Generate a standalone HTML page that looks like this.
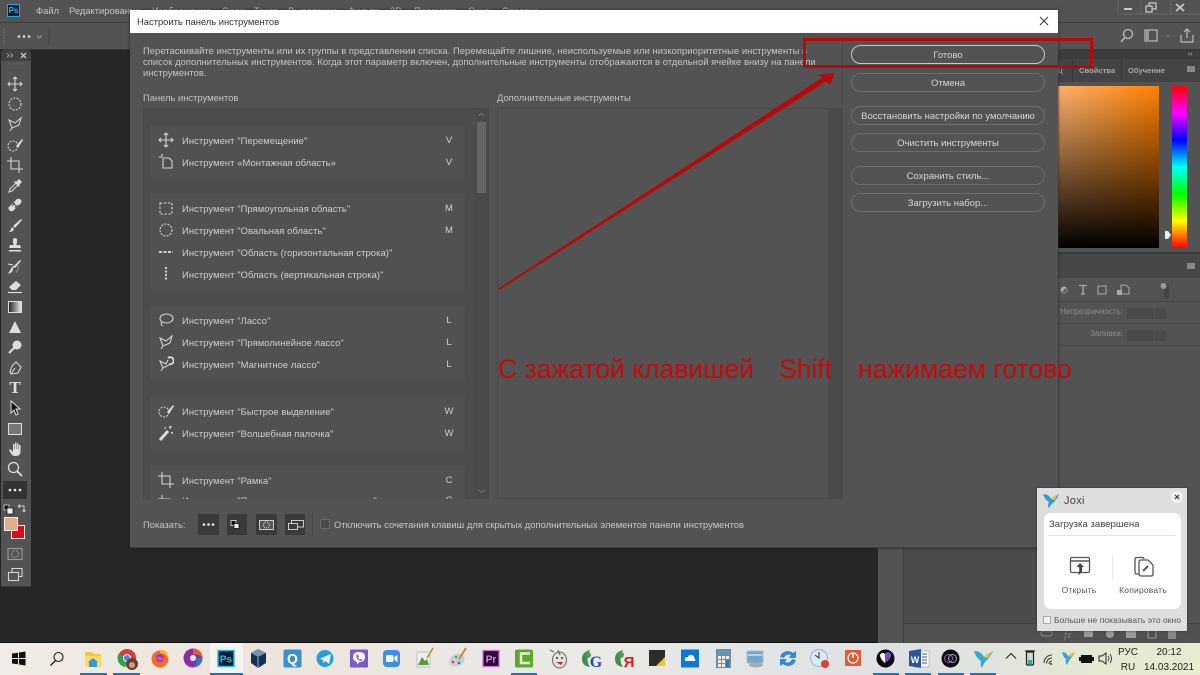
<!DOCTYPE html>
<html lang="ru"><head><meta charset="utf-8"><title>Photoshop</title>
<style>
html,body{margin:0;padding:0;width:1200px;height:675px;overflow:hidden;background:#535353}
body{position:relative;font-family:"Liberation Sans",sans-serif;font-size:9.4px;color:#d0d0d0}
.a{position:absolute}
.t{position:absolute;white-space:nowrap;line-height:12px}
.m{color:#c4c4c4;top:5px;font-size:9.4px}
.row{position:absolute;left:182px;white-space:nowrap;line-height:12px;color:#cfcfcf;font-size:9.4px;letter-spacing:.08px}
.k{position:absolute;left:429px;width:40px;text-align:center;line-height:12px;color:#cfcfcf;font-size:9.5px}
.g{position:absolute;left:150px;width:315px;background:#515151;border:1px solid #4f4f4f;box-sizing:border-box}
.b{position:absolute;left:851px;width:194px;height:19px;box-sizing:border-box;border:1px solid #6e6e6e;border-radius:10px;text-align:center;line-height:20px;color:#d6d6d6;font-size:9.5px}
.s{position:absolute;background:#3a3a3a;width:21px;height:21px;top:514px}
svg{position:absolute;overflow:visible}
.ic{fill:none;stroke:#d4d4d4;stroke-width:1.1}
.bar{position:absolute;top:673px;height:2px;background:#0a78d4}
</style></head><body>

<!-- PS chrome -->
<div class="a" style="left:0;top:0;width:1200px;height:22px;background:#535353"></div>
<div class="a" style="left:0;top:22px;width:1200px;height:1px;background:#3e3e3e"></div>
<div class="a" style="left:0;top:49px;width:1200px;height:1px;background:#3a3a3a"></div>
<div class="a" style="left:7px;top:4px;width:13px;height:13px;background:#001d34;border:1px solid #1fa8e8;box-sizing:border-box;color:#35b4f5;font-size:8px;font-weight:bold;line-height:11px;text-align:center">Ps</div>
<div class="t m" style="left:36px">Файл</div>
<div class="t m" style="left:69px">Редактирование</div>
<div class="t m" style="left:152px">Изображение</div>
<div class="t m" style="left:222px">Слои</div>
<div class="t m" style="left:254px">Текст</div>
<div class="t m" style="left:288px">Выделение</div>
<div class="t m" style="left:348px">Фильтр</div>
<div class="t m" style="left:390px">3D</div>
<div class="t m" style="left:414px">Просмотр</div>
<div class="t m" style="left:468px">Окно</div>
<div class="t m" style="left:502px">Справка</div>
<svg style="left:1118px;top:0" width="82" height="16"><path d="M0 0V11Q0 14 3 14H82" fill="none" stroke="#666"/><path d="M23 0V14M53 0V14" stroke="#666"/><path d="M6 9H14" stroke="#ccc" stroke-width="2"/><path d="M28 6H34V12H28ZM31 6V3H38V9H34" fill="none" stroke="#ccc" stroke-width="1.2"/><path d="M58 4L66 11M66 4L58 11" stroke="#ccc" stroke-width="1.7"/></svg>

<!-- options bar -->
<svg style="left:0;top:23px" width="60" height="26"><path d="M4 5V22" stroke="#777" stroke-dasharray="1 1"/><circle cx="19" cy="13.5" r="1.3" fill="#ddd"/><circle cx="24" cy="13.5" r="1.3" fill="#ddd"/><circle cx="29" cy="13.5" r="1.3" fill="#ddd"/><path d="M37 12.5L39.5 15L42 12.5" fill="none" stroke="#999"/><path d="M49 5V22" stroke="#474747" stroke-width="1.5"/></svg>
<svg style="left:1118px;top:27px" width="82" height="18"><circle cx="10" cy="7" r="4.5" fill="none" stroke="#bbb" stroke-width="1.3"/><path d="M7 10.5L3 15" stroke="#bbb" stroke-width="1.4"/><rect x="27" y="3" width="12" height="11" fill="none" stroke="#bbb" stroke-width="1.2"/><rect x="28" y="4" width="3" height="9" fill="#999"/><path d="M48 8L50 10L52 8" fill="none" stroke="#777"/><path d="M63 8V15H75V8M69 11V2M66 5L69 2L72 5" fill="none" stroke="#bbb" stroke-width="1.2"/></svg>

<!-- canvas -->
<div class="a" style="left:0;top:50px;width:878px;height:593px;background:#262626"></div>
<div class="a" style="left:878px;top:50px;width:25px;height:593px;background:#535353"></div>
<div class="a" style="left:903px;top:50px;width:1px;height:593px;background:#3d3d3d"></div>
<div class="a" style="left:904px;top:50px;width:296px;height:573px;background:#4b4b4b"></div>
<div class="a" style="left:904px;top:623px;width:296px;height:1px;background:#424242"></div>
<div class="a" style="left:904px;top:624px;width:296px;height:19px;background:#505050"></div>
<div class="a" style="left:0;top:642px;width:878px;height:1px;background:#111"></div>

<!-- toolbar -->
<div class="a" style="left:1px;top:50px;width:30px;height:537px;background:#535353;border-radius:3px 3px 0 0;border-bottom:1px solid #3a3a3a;box-sizing:border-box"></div>
<div class="a" style="left:1px;top:50px;width:30px;height:11px;background:#414141;border-radius:3px 3px 0 0"></div>
<svg style="left:0;top:50px" width="32" height="16"><path d="M7 3.5L9 5.5L7 7.5M10.5 3.5L12.500 5.500L10.500 7.500" fill="none" stroke="#bbb" stroke-width=".8"/><path d="M21 3L26 8M26 3L21 8" stroke="#ddd" stroke-width="1.1"/><path d="M8 14H23" stroke="#6a6a6a" stroke-dasharray="1 1"/></svg>

<svg width="0" height="0" style="left:0;top:0"><defs>
<symbol id="mv" viewBox="0 0 16 16"><path class="ic" d="M8 1V15M1 8H15M6 3L8 1L10 3M6 13L8 15L10 13M3 6L1 8L3 10M13 6L15 8L13 10" stroke-width="1.3"/></symbol>
<symbol id="art" viewBox="0 0 16 16"><path class="ic" d="M4 0V3M1 3H4M5 4H11L14 7V14H5V4Z"/></symbol>
<symbol id="rc" viewBox="0 0 16 16"><rect class="ic" x="2" y="3" width="12" height="11" stroke-dasharray="2.500 1.500"/></symbol>
<symbol id="ov" viewBox="0 0 16 16"><circle class="ic" cx="8" cy="8" r="6" stroke-dasharray="2 1.300"/></symbol>
<symbol id="hr" viewBox="0 0 16 16"><path d="M1 8H15" stroke="#cfcfcf" stroke-width="2" stroke-dasharray="3 1.500"/></symbol>
<symbol id="vr" viewBox="0 0 16 16"><path d="M8 1V15" stroke="#cfcfcf" stroke-width="2" stroke-dasharray="2 1.500"/></symbol>
<symbol id="ls" viewBox="0 0 16 16"><ellipse class="ic" cx="8.500" cy="6.500" rx="6.500" ry="4.500"/><path class="ic" d="M4 10Q2 13 5 14"/></symbol>
<symbol id="pl" viewBox="0 0 16 16"><path class="ic" d="M14 2L12 9L5 12L2 4L8 7ZM5 12L3 15"/></symbol>
<symbol id="mg" viewBox="0 0 16 16"><path class="ic" d="M10 4L8 8L2 5L5 12L11 9M5 12L3 15"/><path d="M10 2A3.500 3.500 0 1 1 11 8" fill="none" stroke="#ddd" stroke-width="1.800"/></symbol>
<symbol id="qk" viewBox="0 0 16 16"><circle class="ic" cx="6" cy="9" r="5" stroke-dasharray="2 1.300"/><path d="M9 9L15 2L16 3L11 11Z" fill="#ddd"/></symbol>
<symbol id="wd" viewBox="0 0 16 16"><path d="M2 15L10 6" stroke="#ddd" stroke-width="3"/><path d="M12 1V4M14 2H11M14 7V9M13 8H15M7 2V4" stroke="#ddd"/></symbol>
<symbol id="cr" viewBox="0 0 16 16"><path class="ic" d="M4 0V12H16M0 4H12V16" stroke-width="1.400"/></symbol>
<symbol id="ey" viewBox="0 0 16 16"><path class="ic" d="M9 5L3 11L2 14L5 13L11 7"/><path d="M9 4L12 1L15 4L12 7L13 8L12 9L7 4L8 3Z" fill="#ddd"/></symbol>
<symbol id="he" viewBox="0 0 16 16"><path d="M2 10L10 2Q12 1 14 3Q15 5 14 6L6 14Q4 15 2 13Q1 11 2 10Z" fill="#ddd"/><path d="M6 6L10 10M5 9L8 6M8 11L11 8" stroke="#535353"/></symbol>
<symbol id="br" viewBox="0 0 16 16"><path d="M14 1L15 2L8 10L6 8ZM5 9L7 11Q6 14 2 14Q4 12 5 9Z" fill="#ddd"/></symbol>
<symbol id="st" viewBox="0 0 16 16"><path d="M6 2Q8 0 10 2V6L9 8H13L14 11H2L3 8H7L6 6ZM2 13H14V14.500H2Z" fill="#ddd"/></symbol>
<symbol id="hb" viewBox="0 0 16 16"><path d="M13 1L14 2L8 9L6 8Z" fill="#ddd"/><path d="M6 8L5 12Q3 14 2 14Q4 11 5 9ZM1 5L6 6" stroke="#ddd" fill="#ddd"/><path class="ic" d="M11 7Q12 11 9 13" stroke-dasharray="1 1"/></symbol>
<symbol id="er" viewBox="0 0 16 16"><path d="M9 2L14 6L9 11H5L2 8Z" fill="#ddd"/><path d="M1 13.500H15" stroke="#ddd" stroke-width="1.200"/></symbol>
<symbol id="gr" viewBox="0 0 16 16"><defs><linearGradient id="gg"><stop offset="0" stop-color="#222"/><stop offset="1" stop-color="#eee"/></linearGradient></defs><rect x="1.500" y="2.500" width="13" height="11" fill="url(#gg)" stroke="#ddd"/></symbol>
<symbol id="fl" viewBox="0 0 16 16"><path d="M8 2L14 14H2Z" fill="#ddd"/></symbol>
<symbol id="dg" viewBox="0 0 16 16"><circle cx="10" cy="6" r="4.500" fill="#ddd"/><path d="M7 9L2 14" stroke="#ddd" stroke-width="2"/></symbol>
<symbol id="pn" viewBox="0 0 16 16"><path class="ic" d="M9 2L14 7L11 13L4 14L3 12L5 6ZM4 14L8 8" stroke-width="1.300"/></symbol>
<symbol id="ar" viewBox="0 0 16 16"><path d="M4 1L13 9H9L11 14L9 15L7 10L4 13Z" fill="#111" stroke="#ddd"/></symbol>
<symbol id="sq" viewBox="0 0 16 16"><rect x="1.500" y="2.500" width="13" height="11" fill="#777" stroke="#ddd"/></symbol>
<symbol id="hd" viewBox="0 0 16 16"><path d="M3 8L6 11V3H7.500V8H8V1.500H9.500V8H10V2.500H11.500V8H12V4H13.500V11Q13 15 9 15H7Q5 15 2 9Z" fill="#ddd"/></symbol>
<symbol id="zm" viewBox="0 0 16 16"><circle cx="6.500" cy="6.500" r="5" fill="none" stroke="#ddd" stroke-width="1.300"/><path d="M10 10L15 15" stroke="#ddd" stroke-width="1.800"/></symbol>
<symbol id="scr" viewBox="0 0 16 16"><rect class="ic" x="1.500" y="6.500" width="10" height="8"/><path class="ic" d="M5 6V2.500H15V10.500H12"/></symbol>
<symbol id="qm" viewBox="0 0 16 16"><rect class="ic" x="1" y="2.500" width="14" height="11"/><circle class="ic" cx="8" cy="8" r="3.500" stroke-dasharray="1.500 1"/></symbol>
</defs></svg>

<svg style="left:7px;top:76px" width="16" height="16"><use href="#mv"/></svg>
<svg style="left:7px;top:96px" width="16" height="16"><use href="#ov"/></svg>
<svg style="left:7px;top:116px" width="16" height="16"><use href="#pl"/></svg>
<svg style="left:7px;top:137px" width="16" height="16"><use href="#qk"/></svg>
<svg style="left:7px;top:157px" width="16" height="16"><use href="#cr"/></svg>
<svg style="left:7px;top:178px" width="16" height="16"><use href="#ey"/></svg>
<svg style="left:7px;top:197px" width="16" height="16"><use href="#he"/></svg>
<svg style="left:7px;top:218px" width="16" height="16"><use href="#br"/></svg>
<svg style="left:7px;top:237px" width="16" height="16"><use href="#st"/></svg>
<svg style="left:7px;top:259px" width="16" height="16"><use href="#hb"/></svg>
<svg style="left:7px;top:279px" width="16" height="16"><use href="#er"/></svg>
<svg style="left:7px;top:299px" width="16" height="16"><use href="#gr"/></svg>
<svg style="left:7px;top:319px" width="16" height="16"><use href="#fl"/></svg>
<svg style="left:7px;top:339px" width="16" height="16"><use href="#dg"/></svg>
<svg style="left:7px;top:360px" width="16" height="16"><use href="#pn"/></svg>
<div class="t" style="left:5px;top:378px;width:20px;text-align:center;font:bold 17px/20px 'Liberation Serif',serif;color:#ddd">T</div>
<svg style="left:7px;top:400px" width="16" height="16"><use href="#ar"/></svg>
<svg style="left:7px;top:421px" width="16" height="16"><use href="#sq"/></svg>
<svg style="left:7px;top:441px" width="16" height="16"><use href="#hd"/></svg>
<svg style="left:7px;top:461px" width="16" height="16"><use href="#zm"/></svg>
<div class="a" style="left:3px;top:481px;width:24px;height:18px;background:#333"></div>
<svg style="left:3px;top:481px" width="24" height="18"><circle cx="7" cy="9" r="1.300" fill="#eee"/><circle cx="12" cy="9" r="1.300" fill="#eee"/><circle cx="17" cy="9" r="1.300" fill="#eee"/></svg>
<svg style="left:3px;top:504px" width="24" height="12"><rect x="1" y="1" width="5" height="5" fill="#111" stroke="#eee" stroke-width=".7"/><rect x="4" y="4" width="6" height="6" fill="#eee" stroke="#111" stroke-width=".7"/><path d="M15 2H21V8M15 2L17 0.500M15 2L17 4M21 8L19.500 6M21 8L22.500 6" fill="none" stroke="#ccc"/></svg>
<div class="a" style="left:11px;top:525px;width:14px;height:14px;background:#e30613;border:1px solid #eee;box-sizing:border-box"></div>
<div class="a" style="left:4px;top:517px;width:14px;height:14px;background:#e0ae8c;border:1px solid #eee;box-sizing:border-box"></div>
<svg style="left:7px;top:546px;opacity:.55" width="16" height="16"><use href="#qm"/></svg>
<svg style="left:7px;top:566px" width="16" height="16"><use href="#scr"/></svg>

<!-- right docks -->
<div class="a" style="left:1058px;top:50px;width:142px;height:9px;background:#3d3d3d"></div>
<div class="t" style="left:1188px;top:49px;color:#ccc;font-size:7px">››</div>
<div class="a" style="left:1058px;top:59px;width:142px;height:23px;background:#444"></div>
<div class="a" style="left:1058px;top:82px;width:142px;height:170px;background:#535353"></div>
<div class="t" style="left:1058px;top:65px;color:#a8a8a8;font-size:8px">ц</div>
<div class="t" style="left:1079px;top:65px;color:#a8a8a8;font-size:7.600px;font-weight:bold">Свойства</div>
<div class="t" style="left:1128px;top:65px;color:#a8a8a8;font-size:7.600px;font-weight:bold">Обучение</div>
<div class="a" style="left:1072px;top:59px;width:1px;height:23px;background:#383838"></div>
<div class="a" style="left:1121px;top:59px;width:1px;height:23px;background:#383838"></div>
<div class="a" style="left:1187px;top:66px;width:8px;height:6px;background:#888"></div>
<div class="a" style="left:1058px;top:86px;width:101px;height:162px;background:linear-gradient(to bottom,rgba(0,0,0,0),#000),linear-gradient(to right,#ffb36f,#ff8000)"></div>
<div class="a" style="left:1172px;top:86px;width:15px;height:162px;background:linear-gradient(to bottom,#f00,#f0f 16.700%,#00f 33.300%,#0ff 50%,#0f0 66.700%,#ff0 83.300%,#f00)"></div>
<svg style="left:1164px;top:230px" width="8" height="10"><path d="M1 1H4L7 5L4 9H1Z" fill="#eee"/></svg>
<div class="a" style="left:1058px;top:252px;width:142px;height:2px;background:#3a3a3a"></div>
<div class="a" style="left:1058px;top:254px;width:142px;height:24px;background:#474747"></div>
<div class="a" style="left:1187px;top:263px;width:8px;height:6px;background:#888"></div>
<div class="a" style="left:1058px;top:278px;width:142px;height:345px;background:#535353"></div>
<div class="a" style="left:1058px;top:301px;width:142px;height:1px;background:#474747"></div>
<div class="a" style="left:1058px;top:323px;width:142px;height:1px;background:#474747"></div>
<div class="a" style="left:1058px;top:345px;width:142px;height:1px;background:#474747"></div>
<svg style="left:1058px;top:282px" width="115" height="18"><circle cx="6" cy="8" r="3.500" fill="#aaa"/><path d="M3.500 10.500L8.500 5.500V10.500Z" fill="#555"/><path d="M21 3.500H29M25 3.500V12M23 12H27" stroke="#aaa" stroke-width="1.300" fill="none"/><rect x="40" y="4" width="8" height="8" fill="none" stroke="#aaa"/><path d="M40 4h.1M48 4h.1M40 12h.1M48 12h.1" stroke="#aaa" stroke-width="3"/><path d="M63 3H68L71 6V12H63Z" fill="none" stroke="#aaa"/><rect x="59" y="8" width="5" height="5" fill="#aaa"/><rect x="106" y="2" width="5" height="15" rx="2.500" fill="#444"/><circle cx="105.500" cy="4" r="3" fill="#999"/></svg>
<div class="t" style="left:1058px;width:65px;top:306px;text-align:right;color:#8d8d8d;font-size:8px">Непрозрачность:</div>
<div class="t" style="left:1058px;width:65px;top:328px;text-align:right;color:#8d8d8d;font-size:8px">Заливка:</div>
<div class="a" style="left:1127px;top:308px;width:27px;height:11px;background:#4a4a4a"></div>
<div class="a" style="left:1155px;top:308px;width:11px;height:11px;background:#4a4a4a"></div>
<div class="a" style="left:1127px;top:330px;width:27px;height:11px;background:#4a4a4a"></div>
<div class="a" style="left:1155px;top:330px;width:11px;height:11px;background:#4a4a4a"></div>
<svg style="left:1040px;top:627px" width="150" height="14"><rect x="1" y="4" width="11" height="5" rx="2.500" fill="none" stroke="#8a8a8a"/><text x="24" y="11" fill="#8a8a8a" font-size="10" font-style="italic" font-family="Liberation Serif">fx</text><rect x="44" y="3" width="9" height="7" fill="#999"/><circle cx="70" cy="7" r="4" fill="#999"/><rect x="86" y="3" width="10" height="8" fill="#999"/><rect x="108" y="3" width="8" height="8" fill="none" stroke="#999"/><rect x="128" y="3" width="8" height="9" fill="#888"/></svg>

<!-- dialog -->
<div class="a" style="left:130px;top:10px;width:928px;height:538px;background:#535353;box-shadow:0 0 3px #222;border-bottom:1px solid #3f3f3f;box-sizing:border-box"></div>
<div class="a" style="left:130px;top:10px;width:928px;height:23px;background:#fff"></div>
<div class="t" style="left:137px;top:16px;color:#333;font-size:9.4px">Настроить панель инструментов</div>
<svg style="left:1039px;top:16px" width="10" height="10"><path d="M1 1L9 9M9 1L1 9" stroke="#333" stroke-width="1"/></svg>
<div class="a" style="left:842px;top:33px;width:1px;height:466px;background:#4a4a4a"></div>
<div class="t" style="left:143px;top:44.500px;color:#c6c6c6;line-height:11px;font-size:9.4px;letter-spacing:.05px">Перетаскивайте инструменты или их группы в представлении списка. Перемещайте лишние, неиспользуемые или низкоприоритетные инструменты в<br>список дополнительных инструментов. Когда этот параметр включен, дополнительные инструменты отображаются в отдельной ячейке внизу на панели<br>инструментов.</div>
<div class="t" style="left:143px;top:92px;color:#c4c4c4;font-size:9.4px">Панель инструментов</div>
<div class="t" style="left:497px;top:92px;color:#c4c4c4;font-size:9.4px">Дополнительные инструменты</div>

<div class="a" style="left:143px;top:108px;width:346px;height:391px;background:#4c4c4c;border:1px solid #484848;box-sizing:border-box;overflow:hidden"></div>
<div class="a" style="left:475px;top:109px;width:13px;height:389px;background:#4a4a4a"></div>
<div class="a" style="left:477px;top:122px;width:9px;height:71px;background:#656565"></div>
<svg style="left:477px;top:112px" width="9" height="6"><path d="M1.500 4L4.500 1.500L7.500 4" fill="none" stroke="#777"/></svg>
<svg style="left:477px;top:488px" width="9" height="6"><path d="M1.500 2L4.500 4.500L7.500 2" fill="none" stroke="#777"/></svg>

<div class="g" style="top:125px;height:53px"></div>
<div class="g" style="top:193px;height:97px"></div>
<div class="g" style="top:306px;height:75px"></div>
<div class="g" style="top:396px;height:54px"></div>
<div class="a" style="left:150px;top:465px;width:315px;height:34px;overflow:hidden">
<div class="g" style="left:0;top:0;height:60px"></div>
<div class="row" style="left:32px;top:30px">Инструмент "Перспективное кадрирование"</div>
<div class="k" style="left:279px;top:30px">C</div>
<svg style="left:8px;top:30px" width="16" height="16"><use href="#cr"/></svg>
</div>

<svg style="left:158px;top:132px" width="16" height="16"><use href="#mv"/></svg>
<svg style="left:158px;top:154px" width="16" height="16"><use href="#art"/></svg>
<svg style="left:158px;top:200px" width="16" height="16"><use href="#rc"/></svg>
<svg style="left:158px;top:222px" width="16" height="16"><use href="#ov"/></svg>
<svg style="left:158px;top:244px" width="16" height="16"><use href="#hr"/></svg>
<svg style="left:158px;top:266px" width="16" height="16"><use href="#vr"/></svg>
<svg style="left:158px;top:312px" width="16" height="16"><use href="#ls"/></svg>
<svg style="left:158px;top:334px" width="16" height="16"><use href="#pl"/></svg>
<svg style="left:158px;top:356px" width="16" height="16"><use href="#mg"/></svg>
<svg style="left:158px;top:403px" width="16" height="16"><use href="#qk"/></svg>
<svg style="left:158px;top:425px" width="16" height="16"><use href="#wd"/></svg>
<svg style="left:158px;top:472px" width="16" height="16"><use href="#cr"/></svg>

<div class="row" style="top:134.500px">Инструмент "Перемещение"</div><div class="k" style="top:134.500px">V</div>
<div class="row" style="top:156.500px">Инструмент «Монтажная область»</div><div class="k" style="top:156.500px">V</div>
<div class="row" style="top:202.500px">Инструмент "Прямоугольная область"</div><div class="k" style="top:202.500px">M</div>
<div class="row" style="top:224.500px">Инструмент "Овальная область"</div><div class="k" style="top:224.500px">M</div>
<div class="row" style="top:246.500px">Инструмент "Область (горизонтальная строка)"</div>
<div class="row" style="top:268.500px">Инструмент "Область (вертикальная строка)"</div>
<div class="row" style="top:314.500px">Инструмент "Лассо"</div><div class="k" style="top:314.500px">L</div>
<div class="row" style="top:336.500px">Инструмент "Прямолинейное лассо"</div><div class="k" style="top:336.500px">L</div>
<div class="row" style="top:358.500px">Инструмент "Магнитное лассо"</div><div class="k" style="top:358.500px">L</div>
<div class="row" style="top:405.500px">Инструмент "Быстрое выделение"</div><div class="k" style="top:405.500px">W</div>
<div class="row" style="top:427.500px">Инструмент "Волшебная палочка"</div><div class="k" style="top:427.500px">W</div>
<div class="row" style="top:474.500px">Инструмент "Рамка"</div><div class="k" style="top:474.500px">C</div>

<div class="a" style="left:497px;top:108px;width:345px;height:391px;background:#535353;border:1px solid #484848;box-sizing:border-box"></div>
<div class="a" style="left:828px;top:109px;width:13px;height:389px;background:#4a4a4a"></div>

<div class="b" style="top:45px;border-color:#c8c8c8;border-width:1.500px;line-height:19px">Готово</div>
<div class="b" style="top:73px">Отмена</div>
<div class="b" style="top:106px">Восстановить настройки по умолчанию</div>
<div class="b" style="top:133px">Очистить инструменты</div>
<div class="b" style="top:166px">Сохранить стиль...</div>
<div class="b" style="top:193px">Загрузить набор...</div>

<div class="t" style="left:143px;top:519px;color:#c4c4c4;font-size:9.4px">Показать:</div>
<div class="s" style="left:198px"></div><div class="s" style="left:227px;width:20px"></div><div class="s" style="left:256px"></div><div class="s" style="left:285px;width:20px"></div>
<svg style="left:198px;top:514px" width="110" height="21"><circle cx="6" cy="10.500" r="1.300" fill="#eee"/><circle cx="10.500" cy="10.500" r="1.300" fill="#eee"/><circle cx="15" cy="10.500" r="1.300" fill="#eee"/><rect x="33" y="6.500" width="5" height="5" fill="#111" stroke="#eee" stroke-width=".8"/><rect x="36" y="9.500" width="5" height="5" fill="#eee" stroke="#111" stroke-width=".8"/><rect x="61.500" y="6.500" width="14" height="9" fill="#555" stroke="#ccc"/><circle cx="68.500" cy="11" r="3" fill="none" stroke="#ccc" stroke-dasharray="1.200 .8"/><rect x="90.500" y="9.500" width="9" height="6" fill="none" stroke="#ccc"/><path d="M93.500 9V6.500H105.500V13H100" fill="none" stroke="#ccc"/></svg>
<div class="a" style="left:312px;top:512px;width:1px;height:24px;background:#484848"></div>
<div class="a" style="left:320px;top:519px;width:10px;height:10px;background:#4a4a4a;border:1px solid #6c6c6c;border-radius:2px;box-sizing:border-box"></div>
<div class="t" style="left:334px;top:519px;color:#c8c8c8;font-size:9.4px;letter-spacing:.02px">Отключить сочетания клавиш для скрытых дополнительных элементов панели инструментов</div>

<!-- annotations -->
<div class="a" style="left:803px;top:38px;width:290px;height:30px;box-sizing:border-box;border:3px solid #b50a0a"></div>
<svg style="left:0;top:0" width="1200" height="675"><polygon points="498.500,288.500 822.500,77.500 818,75 835,73 830,85 826,81.500 499.500,290" fill="#b80808"/></svg>
<div class="t" style="left:498px;top:355px;color:#c40a0a;font-size:26.500px;line-height:28px">С зажатой клавишей</div>
<div class="t" style="left:779px;top:355px;color:#c40a0a;font-size:26.500px;line-height:28px">Shift</div>
<div class="t" style="left:858px;top:355px;color:#c40a0a;font-size:26.500px;line-height:28px">нажимаем готово</div>

<!-- Joxi -->
<div class="a" style="left:1037px;top:488px;width:150px;height:143px;background:#dedede;box-shadow:0 0 2px #333"></div>
<svg style="left:1043px;top:493px" width="17" height="16"><path d="M0 1Q6 1 8 6Q11 3 16 1Q14 6 11 9Q8 11 6 15Q4 13 6 9Q2 7 0 1Z" fill="#2f9fd0"/><path d="M8 6Q11 3 16 1Q13 3 12 7Z" fill="#e8c23a"/></svg>
<div class="t" style="left:1064px;top:495px;color:#444;font-size:11px;letter-spacing:.3px">Joxi</div>
<div class="a" style="left:1171px;top:491px;width:12px;height:12px;background:#f0f0f0;border-radius:50%"></div>
<svg style="left:1174px;top:494px" width="6" height="6"><path d="M1 1L5 5M5 1L1 5" stroke="#333" stroke-width="1.200"/></svg>
<div class="a" style="left:1044px;top:513px;width:137px;height:96px;background:#fff;border-radius:7px"></div>
<div class="t" style="left:1049px;top:519px;color:#444;font-size:9.600px">Загрузка завершена</div>
<div class="a" style="left:1049px;top:535px;width:126px;height:1px;background:#e4e4e4"></div>
<div class="a" style="left:1112px;top:555px;width:1px;height:25px;background:#e6e6e6"></div>
<svg style="left:1069px;top:556px" width="22" height="22"><rect x="1.500" y="1.500" width="19" height="15" rx="1.500" fill="none" stroke="#555" stroke-width="1.300"/><path d="M1 5H21" stroke="#555" stroke-width="1.500"/><path d="M11 7L15 11H13V15Q12 18 9 19Q11 16 10 11H7.500Z" fill="#444"/></svg>
<svg style="left:1133px;top:556px" width="22" height="22"><path d="M6 18H4Q2 18 2 16V3Q2 1.500 4 1.500H9Q11 1.500 11 3" fill="none" stroke="#555" stroke-width="1.300"/><path d="M8 4H15L20 9V18Q20 20 18 20H8Q6 20 6 18V6Q6 4 8 4Z" fill="#fff" stroke="#555" stroke-width="1.300"/><path d="M10 15L15 10" stroke="#555" stroke-width="2"/></svg>
<div class="t" style="left:1049px;width:60px;top:584px;text-align:center;color:#555;font-size:8.500px;letter-spacing:.2px">Открыть</div>
<div class="t" style="left:1113px;width:60px;top:584px;text-align:center;color:#555;font-size:8.500px;letter-spacing:.2px">Копировать</div>
<div class="a" style="left:1043px;top:616px;width:8px;height:8px;background:#f2f2f2;border:1px solid #aaa;box-sizing:border-box"></div>
<div class="t" style="left:1054px;top:614px;color:#555;font-size:8.500px;letter-spacing:.05px">Больше не показывать это окно</div>

<!-- taskbar -->
<div class="a" style="left:0;top:643px;width:1200px;height:32px;background:linear-gradient(to right,#f1ece5 0%,#ede5dc 20%,#e9e9e6 50%,#dee0e4 75%,#e3e8d4 90%,#e8ecd0 100%)"></div>
<div class="a" style="left:210px;top:643px;width:33px;height:32px;background:#f5f4f1"></div>
<div class="bar" style="left:80px;width:27px"></div>
<div class="bar" style="left:113px;width:27px"></div>
<div class="bar" style="left:210px;width:33px"></div>
<div class="bar" style="left:511px;width:26px"></div>
<div class="bar" style="left:873px;width:26px"></div>
<div class="bar" style="left:905px;width:26px"></div>
<div class="bar" style="left:938px;width:26px"></div>
<div class="bar" style="left:970px;width:26px"></div>
<svg style="left:0;top:643px" width="1200" height="32">
<!-- win -->
<path d="M12 10.500L18 9.700V15H12ZM19 9.500L25.500 8.500V15H19ZM12 16H18V21.300L12 20.500ZM19 16H25.500V22.500L19 21.500Z" fill="#111"/>
<!-- search -->
<circle cx="58.500" cy="14" r="4.500" fill="none" stroke="#222" stroke-width="1.100"/><path d="M55.500 17.500L50.500 22.500" stroke="#222" stroke-width="1.300"/>
<!-- folder -->
<path d="M85 9H92L94 11H101V22H85Z" fill="#f5c643"/><path d="M85 13H101V24H85Z" fill="#fbdc6a"/><path d="M89 24V18H97V24" fill="#2d9ad8"/><path d="M88 19L93 15L98 19" fill="#2d9ad8"/>
<!-- chrome -->
<circle cx="127" cy="15" r="9" fill="#e0392f"/><path d="M127 15L134.500 20A9 9 0 0 1 125 24Z" fill="#f6c11a"/><path d="M127 15L125 24A9 9 0 0 1 118.500 11Z" fill="#2ba24c"/><circle cx="127" cy="15" r="4" fill="#fff"/><circle cx="127" cy="15" r="3" fill="#4485f4"/><circle cx="132" cy="21" r="6" fill="#6a4030"/><circle cx="132" cy="22" r="3" fill="#d49b84"/>
<!-- firefox -->
<circle cx="160" cy="16" r="8.500" fill="#f56a24"/><path d="M160 7Q168 6 168.500 16Q166 10 160 10Z" fill="#fcb62c"/><circle cx="160" cy="15" r="4" fill="#7b3ec6"/><path d="M156 15Q160 12 164 16Q160 19 156 15Z" fill="#f4a"/>
<!-- swirl -->
<circle cx="193" cy="15" r="9.500" fill="#8d2c9e"/><path d="M193 5.500A9.500 9.500 0 0 1 202.500 15Q198 10 193 12Z" fill="#e55b2a"/><path d="M202.500 15A9.500 9.500 0 0 1 193 24.500Q198 20 196 15Z" fill="#2d7ac0"/><circle cx="193" cy="15" r="3" fill="#eee"/>
<!-- Ps -->
<rect x="218" y="7.500" width="16" height="16" fill="#001d34" stroke="#2bbdf0" stroke-width="1.500"/><text x="226" y="19.500" font-size="10" font-weight="bold" fill="#2bbdf0" text-anchor="middle" font-family="Liberation Sans">Ps</text>
<!-- vbox -->
<path d="M258 6L266 10V20L258 25L251 20V10Z" fill="#16314f"/><path d="M258 6L266 10L258 14L251 10Z" fill="#6f93b5"/><path d="M258 14V25" stroke="#aac"/>
<!-- Q -->
<rect x="283.500" y="6.500" width="18" height="18" rx="2" fill="#3e8fc9"/><text x="292.500" y="20.500" font-size="14" font-weight="bold" fill="#fff" text-anchor="middle" font-family="Liberation Sans">Q</text>
<!-- telegram -->
<circle cx="325" cy="15.500" r="8.500" fill="#2a9fd6"/><path d="M320 15.500L331 11L329 21L325.500 18L323.500 20L323 17Z" fill="#e9f5fb"/>
<!-- viber -->
<rect x="350" y="6.500" width="18" height="18" rx="1" fill="#7d59c8"/><path d="M359 9Q365 9 365 14Q365 19 359.500 19L357 21.500V19Q353 18 353 14Q353 9 359 9Z" fill="#fff"/><path d="M356.500 12L358 11.500L359 14L358 15Q359 16 360 16.500L361.500 16L362.500 17.500Q361 18.500 358.500 17Q356 15 356.500 12Z" fill="#7d59c8"/>
<!-- zoom -->
<rect x="383" y="7" width="17" height="17" rx="4" fill="#3b8eee"/><rect x="386" y="12" width="7.500" height="7" rx="1.500" fill="#fff"/><path d="M394.500 14L397.500 12V19L394.500 17Z" fill="#fff"/>
<!-- notepad -->
<rect x="417" y="9" width="13" height="15" fill="#eee" stroke="#999" stroke-width=".5"/><path d="M419 20L422 14L425 18L427 16L429 22H418Z" fill="#5a9a3a"/><path d="M427 15L433 5" stroke="#b88b3a" stroke-width="1.500"/>
<!-- paint -->
<ellipse cx="457" cy="17" rx="8" ry="6" fill="#c7ced6" transform="rotate(-25 457 17)"/><path d="M459 16L466 5" stroke="#c68a3d" stroke-width="2"/><circle cx="453" cy="19" r="1.200" fill="#d33"/><circle cx="456" cy="14" r="1.200" fill="#3a3"/><circle cx="459" cy="20" r="1.200" fill="#36c"/>
<!-- Pr -->
<rect x="483" y="7.500" width="16" height="16" fill="#2a0634" stroke="#d86ae0" stroke-width="1.300"/><text x="491" y="19.500" font-size="10" font-weight="bold" fill="#e08be8" text-anchor="middle" font-family="Liberation Sans">Pr</text>
<!-- Camtasia -->
<rect x="515" y="6.500" width="18" height="18" rx="2" fill="#5da82b"/><path d="M530 10.500H521V20H530" fill="none" stroke="#e8f4d8" stroke-width="2.400"/>
<!-- mouse -->
<ellipse cx="559.500" cy="17" rx="7" ry="8" fill="#e5e2dc" stroke="#666"/><path d="M550 7L554 9M558 7L560 12" stroke="#666" stroke-width="1.200"/><circle cx="557" cy="15" r="1" fill="#333"/><circle cx="562" cy="15" r="1" fill="#333"/><path d="M556 19H563L561 22Z" fill="#a33"/>
<!-- G -->
<path d="M590 7Q582 9 582 16Q582 23 590 24Q585 17 590 7Z" fill="#3e8f4a"/><circle cx="588" cy="12" r="3" fill="#4c9d55"/><text x="596" y="24" font-size="16" font-weight="bold" fill="#1f45d8" text-anchor="middle" font-family="Liberation Serif">G</text>
<!-- Ya -->
<path d="M623 7Q615 9 615 16Q615 23 623 24Q618 17 623 7Z" fill="#3e8f4a"/><circle cx="621" cy="12" r="3" fill="#4c9d55"/><text x="629" y="24" font-size="15" font-weight="bold" fill="#e01818" text-anchor="middle" font-family="Liberation Sans">Я</text>
<!-- sticky -->
<rect x="649" y="7" width="16" height="16" fill="#2b2b2b"/><path d="M665 14V23H656Z" fill="#f4c430"/>
<!-- blue -->
<rect x="681" y="6.500" width="18" height="18" fill="#0a78d4"/><path d="M685 18Q684 14 688 14Q689 11 692 12Q695 13 694 15Q696 16 695 18Z" fill="#fff"/>
<!-- calc -->
<rect x="716" y="6" width="15" height="19" fill="#7b8a98"/><rect x="718" y="8" width="11" height="3" fill="#3aa7e0"/><path d="M718 13H721V16H718ZM722 13H725V16H722ZM726 13H729V16H726ZM718 17H721V20H718ZM722 17H725V20H722ZM718 21H721V24H718ZM722 21H725V24H722Z" fill="#eee"/><rect x="726" y="17" width="3" height="7" fill="#3573a8"/>
<!-- screen -->
<rect x="747" y="8" width="16" height="12" fill="#6fa6d0" stroke="#bbb"/><path d="M748 12H762" stroke="#fff"/><ellipse cx="756" cy="22" rx="7" ry="2.500" fill="#aaa"/>
<!-- sync -->
<path d="M780 14A8 8 0 0 1 793 10L796 8V15H789L791 12A5 5 0 0 0 784 15Z" fill="#2e8ad8"/><path d="M796 17A8 8 0 0 1 783 21L780 23V16H787L785 19A5 5 0 0 0 792 16Z" fill="#2e8ad8"/>
<!-- clock -->
<circle cx="819" cy="15" r="8.500" fill="#dce9f3" stroke="#8fb2cc"/><path d="M819 9V15L815 12" stroke="#333" fill="none"/><circle cx="825" cy="21" r="4" fill="#e03c31"/>
<!-- power -->
<rect x="845" y="7" width="16" height="16" rx="1" fill="#e25a33"/><circle cx="853" cy="15" r="5" fill="none" stroke="#fff" stroke-width="1.300"/><path d="M853 10V15" stroke="#fff" stroke-width="1.500"/>
<!-- heart -->
<circle cx="885.500" cy="15.500" r="9" fill="#0a0a0a"/><path d="M885 11Q888 7 891 11Q892 15 885 20Z" fill="#7d4ac4"/><path d="M885 11Q882 8 880 12Q880 16 885 20Z" fill="#fff"/>
<!-- word -->
<rect x="915" y="8" width="14" height="16" fill="#fff" stroke="#888" stroke-width=".5"/><path d="M922 11H927M922 14H927M922 17H927M922 20H927" stroke="#2b579a"/><path d="M909 8L921 6V25L909 23Z" fill="#2b579a"/><text x="915" y="20" font-size="9" font-weight="bold" fill="#fff" text-anchor="middle" font-family="Liberation Sans">W</text>
<!-- circles -->
<circle cx="950.500" cy="15.500" r="9" fill="#0d0d0d"/><circle cx="948.500" cy="15.500" r="4" fill="none" stroke="#b24bc0"/><circle cx="952.500" cy="15.500" r="4" fill="none" stroke="#8ab"/>
<!-- joxi bird -->
<path d="M974 8Q981 8 984 14Q988 10 993 8Q990 14 987 17Q984 19 982 25Q980 22 981 18Q976 15 974 8Z" fill="#35a7d5"/><path d="M984 14Q988 10 993 8Q990 11 988 15Z" fill="#e8c23a"/>
<!-- tray -->
<path d="M1006 15.500L1011 10.500L1016 15.500" fill="none" stroke="#222" stroke-width="1.100"/>
<rect x="1026.500" y="9" width="7" height="13" rx="1" fill="#cfd8cc" stroke="#222" stroke-width="1.200"/><path d="M1025 8H1035" stroke="#222" stroke-width="1.300"/><rect x="1028" y="17" width="4" height="4" fill="#3a9"/>
<path d="M1044 20A8 8 0 0 1 1052 12M1046.500 20.500A5.500 5.500 0 0 1 1052 15M1049 21A3 3 0 0 1 1052 18" fill="none" stroke="#333" stroke-width="1"/><circle cx="1051" cy="21" r="1" fill="#333"/>
<path d="M1062 9Q1066 9 1068 13Q1071 10 1075 9Q1073 13 1071 15Q1069 17 1067 22Q1065 19 1066 16Q1063 14 1062 9Z" fill="#35a7d5"/><path d="M1068 13Q1071 10 1075 9Q1073 12 1071 14Z" fill="#e8c23a"/>
<rect x="1081" y="12" width="11" height="8" fill="#111"/><rect x="1092" y="14" width="2" height="4" fill="#111"/><rect x="1079" y="14" width="2" height="4" fill="#111"/>
<path d="M1099 13H1102L1106 10V21L1102 18H1099Z" fill="none" stroke="#222"/><path d="M1108 13Q1110 15.500 1108 18M1110 11Q1113 15.500 1110 20" fill="none" stroke="#222" stroke-width=".8"/>
</svg>
<div class="t" style="left:1112px;width:32px;top:647px;text-align:center;color:#222;font-size:10px">РУС</div>
<div class="t" style="left:1112px;width:32px;top:662px;text-align:center;color:#222;font-size:10px">RU</div>
<div class="t" style="left:1144px;width:50px;top:647px;text-align:center;color:#222;font-size:10px">20:12</div>
<div class="t" style="left:1144px;width:50px;top:662px;text-align:center;color:#222;font-size:10px">14.03.2021</div>
</body></html>
